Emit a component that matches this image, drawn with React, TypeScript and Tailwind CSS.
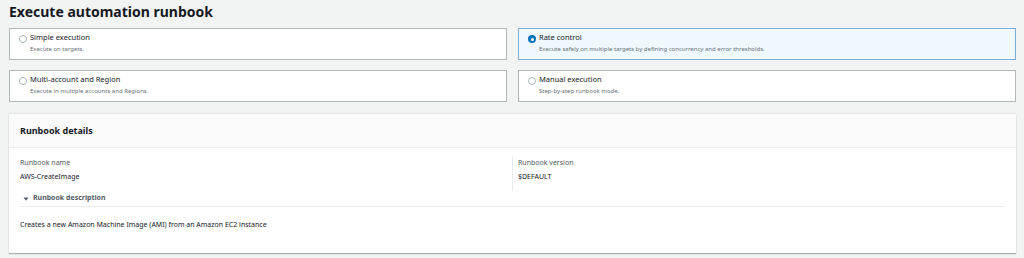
import React, { useState } from 'react';

interface Option {
  id: string;
  title: string;
  description: string;
}

const options: Option[] = [
  { id: 'simple', title: 'Simple execution', description: 'Execute on targets.' },
  {
    id: 'rate',
    title: 'Rate control',
    description: 'Execute safely on multiple targets by defining concurrency and error thresholds.',
  },
  { id: 'multi', title: 'Multi-account and Region', description: 'Execute in multiple accounts and Regions.' },
  { id: 'manual', title: 'Manual execution', description: 'Step-by-step runbook mode.' },
];

function Radio({ checked }: { checked: boolean }) {
  if (checked) {
    return (
      <span className="flex h-[8px] w-[8px] shrink-0 items-center justify-center rounded-full bg-[#0073bb]">
        <span className="block h-[3px] w-[3px] rounded-full bg-white" />
      </span>
    );
  }
  return <span className="block h-[8px] w-[8px] shrink-0 rounded-full border border-[#aab7b8] bg-white" />;
}

function OptionCard({ option, checked, onSelect }: { option: Option; checked: boolean; onSelect: () => void }) {
  return (
    <button
      type="button"
      onClick={onSelect}
      className={`flex h-[32px] items-start gap-[3px] border px-[9px] pt-[3px] text-left ${
        checked ? 'border-[#7aafdc] bg-[#eef8fe]' : 'border-[#b2b8ba] bg-white'
      }`}
    >
      <span className="block pt-[3px]">
        <Radio checked={checked} />
      </span>
      <span className="flex flex-col">
        <span className="text-[7.5px] leading-[11px] text-[#16191f]">{option.title}</span>
        <span className="text-[6px] leading-[12px] text-[#687078]">{option.description}</span>
      </span>
    </button>
  );
}

export default function App() {
  const [selected, setSelected] = useState('rate');

  return (
    <div
      className="h-[258px] w-full bg-[#f2f3f3] pl-[9px] pr-[8px]"
      style={{ fontFamily: '"Noto Sans", "Open Sans", sans-serif' }}
    >
      <h1 className="pt-[1px] text-[14px] font-bold leading-[22px] text-[#16191f]">Execute automation runbook</h1>

      <div className="mt-[5px] grid grid-cols-2 gap-x-[11px] gap-y-[10px]">
        {options.map((option) => (
          <OptionCard
            key={option.id}
            option={option}
            checked={selected === option.id}
            onSelect={() => setSelected(option.id)}
          />
        ))}
      </div>

      <section className="mt-[12px] h-[139px] bg-white shadow-[0_1px_1px_rgba(0,28,36,0.3),0_-1px_1px_rgba(0,28,36,0.06)]">
        <div className="flex h-[34px] items-center border-b border-[#eaeded] bg-[#fafafa] px-[11px]">
          <h2 className="text-[9px] font-bold text-[#16191f]">Runbook details</h2>
        </div>
        <div className="px-[11px] pt-[8px]">
          <div className="grid grid-cols-[492px_1fr]">
            <div className="flex flex-col pb-[7px]">
              <span className="text-[7px] leading-[14px] text-[#545b64]">Runbook name</span>
              <span className="text-[7px] leading-[14px] text-[#16191f]">AWS-CreateImage</span>
            </div>
            <div className="flex flex-col border-l border-[#eaeded] pl-[5px] pb-[7px]">
              <span className="text-[7px] leading-[14px] text-[#545b64]">Runbook version</span>
              <span className="text-[7px] leading-[14px] text-[#16191f]">$DEFAULT</span>
            </div>
          </div>
          <div className="flex h-[16px] items-center gap-[4px] border-b border-[#eaeded] pl-[3px]">
            <svg width="6" height="6" viewBox="0 0 6 6">
              <path d="M0.5 1.5 L5.5 1.5 L3 4.8 Z" fill="#545b64" />
            </svg>
            <span className="text-[7px] font-bold text-[#545b64]">Runbook description</span>
          </div>
          <p className="pt-[13px] text-[7px] leading-[10px] text-[#16191f]">
            Creates a new Amazon Machine Image (AMI) from an Amazon EC2 instance
          </p>
        </div>
      </section>
    </div>
  );
}
